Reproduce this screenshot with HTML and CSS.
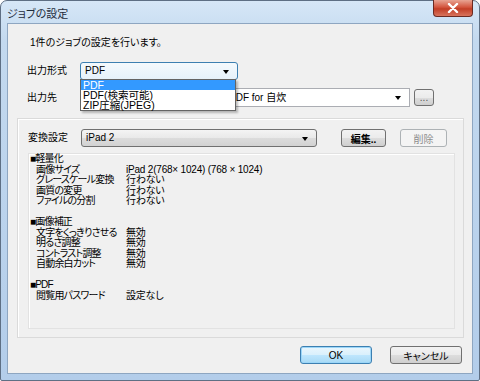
FILE: index.html
```html
<!DOCTYPE html>
<html lang="ja">
<head>
    <meta charset="UTF-8">
    <title>ジョブの設定</title>
    <link rel="stylesheet" href="styles.css">
</head>
<body>
    <div class="window">
        <div class="titlebar">
            <span class="title">ジョブの設定</span>
            <span class="close">
                <svg width="12" height="10" viewBox="0 0 12 10"><path d="M2 1 L10 9 M10 1 L2 9" stroke="#fff" stroke-width="2.4" stroke-linecap="round"/></svg>
            </span>
        </div>
        <div class="client">
            <p class="desc">1件のジョブの設定を行います。</p>

            <div class="row row-format">
                <span class="label">出力形式</span>
                <div class="combo combo-open">PDF<span class="arrow"></span></div>
                <ul class="droplist">
                    <li class="selected">PDF</li>
                    <li>PDF(検索可能)</li>
                    <li>ZIP圧縮(JPEG)</li>
                </ul>
            </div>

            <div class="row row-dest">
                <span class="label">出力先</span>
                <div class="combo combo-edit"><span class="dest-text">PDF for 自炊</span><span class="arrow"></span></div>
                <button class="btn btn-browse">...</button>
            </div>

            <div class="group">
                <div class="group-head">
                    <span class="label">変換設定</span>
                    <div class="combo combo-btn">iPad 2<span class="arrow"></span></div>
                    <button class="btn btn-edit">編集..</button>
                    <button class="btn btn-delete" disabled>削除</button>
                </div>
                <div class="info">
                    <div class="sect">■軽量化</div>
                    <div class="kv">
                        <span>画像サイズ</span><span class="val">iPad 2(768× 1024) (768 × 1024)</span>
                        <span>グレースケール変換</span><span class="val">行わない</span>
                        <span>画質の変更</span><span class="val">行わない</span>
                        <span>ファイルの分割</span><span class="val">行わない</span>
                    </div>
                    <div class="sect">■画像補正</div>
                    <div class="kv">
                        <span>文字をくっきりさせる</span><span class="val">無効</span>
                        <span>明るさ調整</span><span class="val">無効</span>
                        <span>コントラスト調整</span><span class="val">無効</span>
                        <span>自動余白カット</span><span class="val">無効</span>
                    </div>
                    <div class="sect">■PDF</div>
                    <div class="kv">
                        <span>閲覧用パスワード</span><span class="val">設定なし</span>
                    </div>
                </div>
            </div>

            <div class="footer">
                <button class="btn btn-ok">OK</button>
                <button class="btn btn-cancel">キャンセル</button>
            </div>
        </div>
    </div>
</body>
</html>
```

FILE: styles.css
```css
* {
    box-sizing: border-box;
}
body {
    margin: 0;
    font-family: "Liberation Sans", "Noto Sans CJK JP", sans-serif;
    font-size: 10px;
    font-feature-settings: "palt";
    color: #000;
}
.window {
    width: 480px;
    height: 381px;
    border: 1px solid #5e6f84;
    border-radius: 7px 7px 2px 2px;
    padding: 0 6px 6px;
    background: linear-gradient(#d6e7f7, #c3d9ef 40px, #b3cdea);
}
.titlebar {
    height: 22px;
    display: flex;
    justify-content: space-between;
    align-items: flex-start;
}
.title {
    font-size: 11px;
    line-height: 14px;
    margin-top: 6px;
    color: #1e2c3c;
}
.close {
    width: 40px;
    height: 17px;
    margin-top: -1px;
    border: 1px solid #6b2a22;
    border-top: none;
    border-radius: 0 0 4px 4px;
    background: linear-gradient(#e8a493, #d3553e 45%, #c23e26 55%, #d8745d);
    display: flex;
    align-items: center;
    justify-content: center;
}
.client {
    height: 351px;
    border: 1px solid #8ea6c1;
    background: #f0f0f0;
}
.desc {
    margin: 12px 0 0 22px;
    line-height: 14px;
}
.row {
    display: flex;
    align-items: center;
    padding-left: 19px;
    position: relative;
}
.label {
    width: 53px;
    line-height: 14px;
}
.row-format {
    margin-top: 12px;
}
.row-dest {
    margin-top: 8px;
}
.combo {
    height: 18px;
    border: 1px solid #707070;
    border-radius: 3px;
    line-height: 16px;
    padding-left: 4px;
    position: relative;
}
.arrow {
    position: absolute;
    right: 8px;
    top: 7px;
    border-left: 3.5px solid transparent;
    border-right: 3.5px solid transparent;
    border-top: 4px solid #000;
}
.combo-open {
    width: 158px;
    border-color: #3c7fb1;
    background: linear-gradient(#f4f9fd, #e6f1fa);
}
.combo-edit {
    width: 330px;
    height: 19px;
    border-color: #abadb3;
    border-radius: 0;
    background: #fff;
    line-height: 17px;
}
.dest-text {
    padding-left: 144px;
}
.combo-btn {
    width: 236px;
    background: linear-gradient(#f4f4f4, #e9e9e9 50%, #dcdcdc 51%, #d2d2d2);
}
.droplist {
    position: absolute;
    left: 72px;
    top: 17px;
    width: 156px;
    margin: 0;
    padding: 0;
    list-style: none;
    background: #fff;
    border: 1px solid #646464;
    box-shadow: 2px 2px 2px rgba(0, 0, 0, 0.25);
    z-index: 2;
    font-size: 10.5px;
}
.droplist li {
    height: 10px;
    line-height: 10px;
    padding-left: 2px;
}
.droplist .selected {
    background: #3399ff;
    color: #fff;
}
.btn {
    font: inherit;
    height: 18px;
    padding: 0;
    border: 1px solid #707070;
    border-radius: 3px;
    background: linear-gradient(#f2f2f2, #ebebeb 50%, #dddddd 51%, #cfcfcf);
    color: #000;
}
.btn-browse {
    width: 20px;
    height: 17px;
    margin-left: 4px;
    line-height: 8px;
    color: #555;
}
.group {
    margin: 11px 0 0 9px;
    width: 447px;
    height: 220px;
    border: 1px solid #dadada;
    box-shadow: inset 1px 1px 0 #fff;
}
.group-head {
    display: flex;
    align-items: center;
    margin-top: 10px;
    padding-left: 10px;
}
.btn-edit {
    width: 45px;
    margin-left: 24px;
    font-weight: bold;
}
.btn-delete {
    width: 47px;
    margin-left: 14px;
    border-color: #adb2b5;
    background: #f4f4f4;
    color: #8d8d8d;
}
.info {
    margin: 6px 0 0 10px;
    width: 427px;
    height: 176px;
    border: 1px solid #e2e2e2;
    box-shadow: inset 1px 1px 0 #fff;
    padding: 0 1px;
    font-size: 10px;
    line-height: 10.5px;
    letter-spacing: -0.8px;
}
.kv {
    display: grid;
    grid-template-columns: 90px 1fr;
    padding-left: 6px;
    margin-bottom: 10.5px;
}
.val {
    letter-spacing: -0.2px;
}
.footer {
    display: flex;
    margin: 8px 0 0 292px;
    gap: 18px;
}
.btn-ok {
    width: 72px;
    border-color: #3c7fb1;
    background: linear-gradient(#eaf6fd, #d9f0fc 50%, #bee6fd 51%, #a7d9f5);
    box-shadow: inset 0 0 0 1px #9bd6f8;
}
.btn-cancel {
    width: 72px;
}
```
